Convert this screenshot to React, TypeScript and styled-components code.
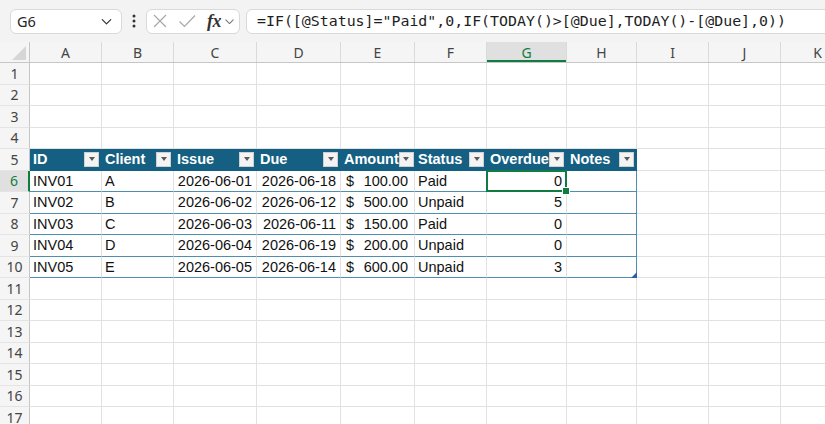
import React from 'react';
import styled, { createGlobalStyle, css } from 'styled-components';

const GlobalStyle = createGlobalStyle`
  html, body {
    margin: 0;
    padding: 0;
    background: #ffffff;
    overflow: hidden;
  }
  * {
    box-sizing: border-box;
  }
`;

const UI_FONT = `"Noto Sans", "Open Sans", sans-serif`;
const CELL_FONT = `"Liberation Sans", Arial, sans-serif`;
const GREEN = '#107c41';
const TABLE_BLUE = '#156082';
const TABLE_LINE = '#4f8db1';
const GRID = '#e1e1e1';

const Page = styled.div`
  width: 825px;
  height: 424px;
  overflow: hidden;
  display: flex;
  flex-direction: column;
  background: #ffffff;
`;

const Toolbar = styled.div`
  height: 42px;
  flex: none;
  display: flex;
  align-items: center;
  padding-left: 10px;
  background: #f3f3f3;
  font-family: ${UI_FONT};
`;

const Box = styled.div`
  height: 25px;
  display: flex;
  align-items: center;
  background: #ffffff;
  border: 1px solid #d9d9d9;
  border-radius: 6px;
`;

const NameBox = styled(Box)`
  width: 112px;
  justify-content: space-between;
  padding: 0 7px 0 6px;
  font-size: 14.5px;
  color: #262626;
`;

const Dots = styled.div`
  width: 24px;
  display: flex;
  justify-content: center;
`;

const FxBox = styled(Box)`
  width: 94px;
  padding-left: 5px;
  gap: 0;
`;

const FxLabel = styled.span`
  font-family: "Liberation Serif", "Times New Roman", serif;
  font-style: italic;
  font-weight: bold;
  font-size: 18px;
  color: #333;
  margin: 0 2px 0 11px;
  letter-spacing: -0.5px;
`;

const FormulaBox = styled(Box)`
  flex: 1;
  margin-left: 6px;
  margin-right: -20px;
  padding-left: 10px;
  font-family: "DejaVu Sans Mono", "Liberation Mono", monospace;
  font-size: 14.9px;
  color: #1e1e1e;
  white-space: nowrap;
`;

const Sheet = styled.div`
  flex: 1;
  display: flex;
  flex-direction: column;
  overflow: hidden;
`;

const HeaderRow = styled.div`
  display: flex;
  height: 21px;
  flex: none;
  background: #f5f5f5;
  border-bottom: 1px solid #c6c6c6;
`;

const Corner = styled.div`
  width: 30px;
  flex: none;
  position: relative;
  border-right: 1px solid #c6c6c6;
  &::after {
    content: '';
    position: absolute;
    right: 3px;
    bottom: 2px;
    width: 14px;
    height: 14px;
    background: #d6d6d6;
    clip-path: polygon(100% 0, 100% 100%, 0 100%);
  }
`;

const ColHead = styled.div<{ $w: number; $active?: boolean }>`
  width: ${(p) => p.$w}px;
  flex: none;
  display: flex;
  align-items: center;
  justify-content: center;
  font-family: ${UI_FONT};
  font-size: 14px;
  color: #444;
  border-right: 1px solid #dadada;
  ${(p) =>
    p.$active &&
    css`
      background: #e0e0e0;
      color: ${GREEN};
      box-shadow: inset 0 -2px 0 ${GREEN};
    `}
`;

const Row = styled.div`
  display: flex;
  height: 21.5px;
  flex: none;
`;

const RowHead = styled.div<{ $active?: boolean }>`
  width: 30px;
  flex: none;
  display: flex;
  align-items: center;
  justify-content: center;
  font-family: ${UI_FONT};
  font-size: 14px;
  color: #444;
  background: #f5f5f5;
  border-right: 1px solid #c6c6c6;
  border-bottom: 1px solid #e4e4e4;
  ${(p) =>
    p.$active &&
    css`
      background: #e0e0e0;
      color: ${GREEN};
      border-right: 2px solid ${GREEN};
    `}
`;

type Kind = 'grid' | 'head' | 'body';

const Cell = styled.div<{
  $w: number;
  $kind: Kind;
  $right?: boolean;
  $edge?: boolean;
  $selected?: boolean;
  $handle?: boolean;
}>`
  width: ${(p) => p.$w}px;
  flex: none;
  position: relative;
  display: flex;
  align-items: center;
  justify-content: ${(p) => (p.$right ? 'flex-end' : 'flex-start')};
  padding: 0 4px 0 3px;
  font-family: ${CELL_FONT};
  font-size: 14.5px;
  color: #111;
  white-space: nowrap;
  border-right: 1px solid ${GRID};
  border-bottom: 1px solid ${GRID};

  ${(p) =>
    p.$kind === 'head' &&
    css`
      background: ${TABLE_BLUE};
      color: #ffffff;
      font-weight: bold;
      justify-content: space-between;
      padding: 0 2px 0 3px;
      border-right-color: ${TABLE_BLUE};
      border-bottom-color: ${TABLE_BLUE};
    `}

  ${(p) =>
    p.$kind === 'body' &&
    css`
      border-bottom-color: ${TABLE_LINE};
    `}

  ${(p) =>
    p.$edge &&
    css`
      border-right-color: ${TABLE_LINE};
    `}

  ${(p) =>
    p.$selected &&
    css`
      &::after {
        content: '';
        position: absolute;
        left: -1px;
        top: -1px;
        right: -1px;
        bottom: -1px;
        border: 2px solid ${GREEN};
      }
      &::before {
        content: '';
        position: absolute;
        right: -4px;
        bottom: -4px;
        width: 6px;
        height: 6px;
        background: ${GREEN};
        border: 1px solid #ffffff;
        z-index: 2;
      }
    `}

  ${(p) =>
    p.$handle &&
    css`
      &::before {
        content: '';
        position: absolute;
        right: -1px;
        bottom: -1px;
        width: 6px;
        height: 6px;
        background: #2b5ea7;
        clip-path: polygon(100% 0, 100% 100%, 0 100%);
      }
    `}
`;

const FilterButton = styled.span`
  width: 15px;
  height: 15px;
  flex: none;
  display: flex;
  align-items: center;
  justify-content: center;
  background: #f3f3f3;
  border: 1px solid #d0d0d0;
  &::after {
    content: '';
    border-left: 3.5px solid transparent;
    border-right: 3.5px solid transparent;
    border-top: 4px solid #595959;
  }
`;

const Money = styled.span`
  width: 100%;
  display: flex;
  justify-content: space-between;
  padding: 0 2px 0 2px;
`;

const columns = [
  { key: 'A', w: 72 },
  { key: 'B', w: 72 },
  { key: 'C', w: 83 },
  { key: 'D', w: 84 },
  { key: 'E', w: 74 },
  { key: 'F', w: 72 },
  { key: 'G', w: 80 },
  { key: 'H', w: 70 },
  { key: 'I', w: 72 },
  { key: 'J', w: 72 },
  { key: 'K', w: 74 },
];

const tableHeads = ['ID', 'Client', 'Issue', 'Due', 'Amount', 'Status', 'Overdue', 'Notes'];

const invoices = [
  ['INV01', 'A', '2026-06-01', '2026-06-18', '100.00', 'Paid', '0', ''],
  ['INV02', 'B', '2026-06-02', '2026-06-12', '500.00', 'Unpaid', '5', ''],
  ['INV03', 'C', '2026-06-03', '2026-06-11', '150.00', 'Paid', '0', ''],
  ['INV04', 'D', '2026-06-04', '2026-06-19', '200.00', 'Unpaid', '0', ''],
  ['INV05', 'E', '2026-06-05', '2026-06-14', '600.00', 'Unpaid', '3', ''],
];

// columns holding numbers or dates sit on the right of their cell
const rightAligned = [2, 3, 6];

const FORMULA = '=IF([@Status]="Paid",0,IF(TODAY()>[@Due],TODAY()-[@Due],0))';

const ChevronDown = ({ size = 14, color = '#444' }: { size?: number; color?: string }) => (
  <svg width={size} height={size} viewBox="0 0 16 16" fill="none">
    <path d="M3.5 6l4.5 4.5L12.5 6" stroke={color} strokeWidth="1.3" strokeLinecap="round" strokeLinejoin="round" />
  </svg>
);

const renderTableCell = (rowIdx: number, colIdx: number, w: number) => {
  const isHeadRow = rowIdx === 5;
  const data = invoices[rowIdx - 6];
  const edge = colIdx === 7;

  if (isHeadRow) {
    return (
      <Cell key={colIdx} $w={w} $kind="head">
        <span>{tableHeads[colIdx]}</span>
        <FilterButton />
      </Cell>
    );
  }

  const value = data[colIdx];
  return (
    <Cell
      key={colIdx}
      $w={w}
      $kind="body"
      $edge={edge}
      $right={rightAligned.includes(colIdx)}
      $selected={rowIdx === 6 && colIdx === 6}
      $handle={rowIdx === 10 && edge}
    >
      {colIdx === 4 ? (
        <Money>
          <span>$</span>
          <span>{value}</span>
        </Money>
      ) : (
        value
      )}
    </Cell>
  );
};

export default function App() {
  const rows = Array.from({ length: 18 }, (_, i) => i + 1);

  return (
    <Page>
      <GlobalStyle />
      <Toolbar>
        <NameBox>
          <span>G6</span>
          <ChevronDown size={15} color="#333" />
        </NameBox>
        <Dots>
          <svg width="4" height="14" viewBox="0 0 4 14">
            <circle cx="2" cy="2" r="1.5" fill="#333" />
            <circle cx="2" cy="7" r="1.5" fill="#333" />
            <circle cx="2" cy="12" r="1.5" fill="#333" />
          </svg>
        </Dots>
        <FxBox>
          <svg width="16" height="16" viewBox="0 0 16 16">
            <path d="M2 2l12 12M14 2L2 14" stroke="#a8a8a8" strokeWidth="1.2" />
          </svg>
          <svg width="18" height="16" viewBox="0 0 18 16" style={{ marginLeft: 10 }}>
            <path d="M1.5 8.5l5 5L17 2.5" stroke="#a8a8a8" strokeWidth="1.2" fill="none" />
          </svg>
          <FxLabel>fx</FxLabel>
          <ChevronDown size={13} color="#777" />
        </FxBox>
        <FormulaBox>{FORMULA}</FormulaBox>
      </Toolbar>

      <Sheet>
        <HeaderRow>
          <Corner />
          {columns.map((c) => (
            <ColHead key={c.key} $w={c.w} $active={c.key === 'G'}>
              {c.key}
            </ColHead>
          ))}
        </HeaderRow>

        {rows.map((r) => (
          <Row key={r}>
            <RowHead $active={r === 6}>{r}</RowHead>
            {columns.map((c, ci) =>
              r >= 5 && r <= 10 && ci < 8 ? (
                renderTableCell(r, ci, c.w)
              ) : (
                <Cell key={c.key} $w={c.w} $kind="grid" />
              )
            )}
          </Row>
        ))}
      </Sheet>
    </Page>
  );
}
